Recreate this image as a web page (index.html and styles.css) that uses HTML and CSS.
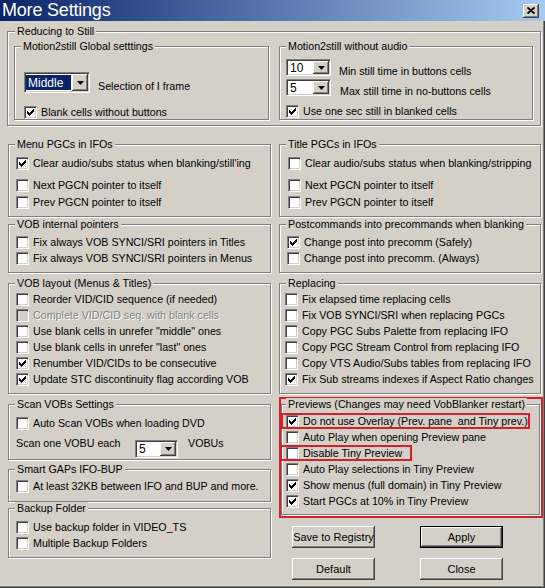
FILE: index.html
```html
<!DOCTYPE html>
<html lang="en">
<head>
    <meta charset="UTF-8">
    <title>More Settings</title>
    <link rel="stylesheet" href="styles.css">
</head>
<body>
<div class="window">
    <div class="titlebar">
        <span class="title">More Settings</span>
        <span class="close"><svg width="8" height="7" viewBox="0 0 8 7"><path d="M0.5 0.5L7.5 6.5M7.5 0.5L0.5 6.5" stroke="#000" stroke-width="1.8"/></svg></span>
    </div>

    <div class="main">
        <div class="group reducing">
            <span class="caption">Reducing to Still</span>
            <div class="pair">
                <div class="group global">
                    <span class="caption">Motion2still Global setttings</span>
                    <div class="combo-row">
                        <span class="combo middle">
                            <span class="field"><span class="sel">Middle</span></span>
                            <span class="drop"><svg width="7" height="4" viewBox="0 0 7 4"><polygon points="0,0 7,0 3.5,4" fill="#000"/></svg></span>
                        </span>
                        <span class="combo-label">Selection of I frame</span>
                    </div>
                    <div class="check gap-global"><span class="box"><svg width="7" height="7" viewBox="0 0 7 7" shape-rendering="crispEdges"><polygon points="0,2 1,2 1,3 2,3 2,4 3,4 3,3 4,3 4,2 5,2 5,1 6,1 6,0 7,0 7,3 6,3 6,4 5,4 5,5 4,5 4,6 3,6 3,7 2,7 2,6 1,6 1,5 0,5"/></svg></span>Blank cells without buttons</div>
                </div>
                <div class="group noaudio">
                    <span class="caption">Motion2still without audio</span>
                    <div class="combo-row">
                        <span class="combo small">
                            <span class="field">10</span>
                            <span class="drop"><svg width="7" height="4" viewBox="0 0 7 4"><polygon points="0,0 7,0 3.5,4" fill="#000"/></svg></span>
                        </span>
                        <span class="combo-label low">Min still time in buttons cells</span>
                    </div>
                    <div class="combo-row second">
                        <span class="combo small">
                            <span class="field">5</span>
                            <span class="drop"><svg width="7" height="4" viewBox="0 0 7 4"><polygon points="0,0 7,0 3.5,4" fill="#000"/></svg></span>
                        </span>
                        <span class="combo-label low wide">Max still time in no-buttons cells</span>
                    </div>
                    <div class="check gap-noaudio"><span class="box"><svg width="7" height="7" viewBox="0 0 7 7" shape-rendering="crispEdges"><polygon points="0,2 1,2 1,3 2,3 2,4 3,4 3,3 4,3 4,2 5,2 5,1 6,1 6,0 7,0 7,3 6,3 6,4 5,4 5,5 4,5 4,6 3,6 3,7 2,7 2,6 1,6 1,5 0,5"/></svg></span>Use one sec still in blanked cells</div>
                </div>
            </div>
        </div>

        <div class="columns">
            <div class="col">
                <div class="group menu">
                    <span class="caption">Menu PGCs in IFOs</span>
                    <div class="check"><span class="box"><svg width="7" height="7" viewBox="0 0 7 7" shape-rendering="crispEdges"><polygon points="0,2 1,2 1,3 2,3 2,4 3,4 3,3 4,3 4,2 5,2 5,1 6,1 6,0 7,0 7,3 6,3 6,4 5,4 5,5 4,5 4,6 3,6 3,7 2,7 2,6 1,6 1,5 0,5"/></svg></span>Clear audio/subs status when blanking/still'ing</div>
                    <div class="check gap6"><span class="box"></span>Next PGCN pointer to itself</div>
                    <div class="check gap1"><span class="box"></span>Prev PGCN pointer to itself</div>
                </div>

                <div class="group pointers">
                    <span class="caption">VOB internal pointers</span>
                    <div class="check"><span class="box"></span>Fix always VOB SYNCI/SRI pointers in Titles</div>
                    <div class="check"><span class="box"></span>Fix always VOB SYNCI/SRI pointers in Menus</div>
                </div>

                <div class="group layout">
                    <span class="caption">VOB layout (Menus &amp; Titles)</span>
                    <div class="check"><span class="box"></span>Reorder VID/CID sequence (if needed)</div>
                    <div class="check disabled"><span class="box dim"></span>Complete VID/CID seq. with blank cells</div>
                    <div class="check"><span class="box"></span>Use blank cells in unrefer "middle" ones</div>
                    <div class="check"><span class="box"></span>Use blank cells in unrefer "last" ones</div>
                    <div class="check"><span class="box"><svg width="7" height="7" viewBox="0 0 7 7" shape-rendering="crispEdges"><polygon points="0,2 1,2 1,3 2,3 2,4 3,4 3,3 4,3 4,2 5,2 5,1 6,1 6,0 7,0 7,3 6,3 6,4 5,4 5,5 4,5 4,6 3,6 3,7 2,7 2,6 1,6 1,5 0,5"/></svg></span>Renumber VID/CIDs to be consecutive</div>
                    <div class="check"><span class="box"><svg width="7" height="7" viewBox="0 0 7 7" shape-rendering="crispEdges"><polygon points="0,2 1,2 1,3 2,3 2,4 3,4 3,3 4,3 4,2 5,2 5,1 6,1 6,0 7,0 7,3 6,3 6,4 5,4 5,5 4,5 4,6 3,6 3,7 2,7 2,6 1,6 1,5 0,5"/></svg></span>Update STC discontinuity flag according VOB</div>
                </div>

                <div class="group scan">
                    <span class="caption">Scan VOBs Settings</span>
                    <div class="check"><span class="box"></span>Auto Scan VOBs when loading DVD</div>
                    <div class="scan-row">
                        <span class="scan-text">Scan one VOBU each</span>
                        <span class="combo scanbox">
                            <span class="field">5</span>
                            <span class="drop"><svg width="7" height="4" viewBox="0 0 7 4"><polygon points="0,0 7,0 3.5,4" fill="#000"/></svg></span>
                        </span>
                        <span class="scan-unit">VOBUs</span>
                    </div>
                </div>

                <div class="group gaps">
                    <span class="caption">Smart GAPs IFO-BUP</span>
                    <div class="check"><span class="box"></span>At least 32KB between IFO and BUP and more.</div>
                </div>

                <div class="group backup">
                    <span class="caption">Backup Folder</span>
                    <div class="check"><span class="box"></span>Use backup folder in VIDEO_TS</div>
                    <div class="check"><span class="box"></span>Multiple Backup Folders</div>
                </div>
            </div>

            <div class="col">
                <div class="group menu titles">
                    <span class="caption">Title PGCs in IFOs</span>
                    <div class="check"><span class="box"></span>Clear audio/subs status when blanking/stripping</div>
                    <div class="check gap6"><span class="box"></span>Next PGCN pointer to itself</div>
                    <div class="check gap1"><span class="box"></span>Prev PGCN pointer to itself</div>
                </div>

                <div class="group pointers">
                    <span class="caption">Postcommands into precommands when blanking</span>
                    <div class="check"><span class="box"><svg width="7" height="7" viewBox="0 0 7 7" shape-rendering="crispEdges"><polygon points="0,2 1,2 1,3 2,3 2,4 3,4 3,3 4,3 4,2 5,2 5,1 6,1 6,0 7,0 7,3 6,3 6,4 5,4 5,5 4,5 4,6 3,6 3,7 2,7 2,6 1,6 1,5 0,5"/></svg></span>Change post into precomm (Safely)</div>
                    <div class="check"><span class="box"></span>Change post into precomm. (Always)</div>
                </div>

                <div class="group layout replacing">
                    <span class="caption">Replacing</span>
                    <div class="check"><span class="box"></span>Fix elapsed time replacing cells</div>
                    <div class="check"><span class="box"></span>Fix VOB SYNCI/SRI when replacing PGCs</div>
                    <div class="check"><span class="box"></span>Copy PGC Subs Palette from replacing IFO</div>
                    <div class="check"><span class="box"></span>Copy PGC Stream Control from replacing IFO</div>
                    <div class="check"><span class="box"></span>Copy VTS Audio/Subs tables from replacing IFO</div>
                    <div class="check"><span class="box"><svg width="7" height="7" viewBox="0 0 7 7" shape-rendering="crispEdges"><polygon points="0,2 1,2 1,3 2,3 2,4 3,4 3,3 4,3 4,2 5,2 5,1 6,1 6,0 7,0 7,3 6,3 6,4 5,4 5,5 4,5 4,6 3,6 3,7 2,7 2,6 1,6 1,5 0,5"/></svg></span>Fix Sub streams indexes if Aspect Ratio changes</div>
                </div>

                <div class="annot">
                    <div class="group previews">
                        <span class="caption">Previews (Changes may need VobBlanker restart)</span>
                        <div class="check mark"><span class="box"><svg width="7" height="7" viewBox="0 0 7 7" shape-rendering="crispEdges"><polygon points="0,2 1,2 1,3 2,3 2,4 3,4 3,3 4,3 4,2 5,2 5,1 6,1 6,0 7,0 7,3 6,3 6,4 5,4 5,5 4,5 4,6 3,6 3,7 2,7 2,6 1,6 1,5 0,5"/></svg></span>Do not use Overlay (Prev. pane&nbsp; and Tiny prev.)</div>
                        <div class="check"><span class="box"></span>Auto Play when opening Preview pane</div>
                        <div class="check mark wide-mark"><span class="box"></span>Disable Tiny Preview</div>
                        <div class="check"><span class="box"></span>Auto Play selections in Tiny Preview</div>
                        <div class="check"><span class="box"><svg width="7" height="7" viewBox="0 0 7 7" shape-rendering="crispEdges"><polygon points="0,2 1,2 1,3 2,3 2,4 3,4 3,3 4,3 4,2 5,2 5,1 6,1 6,0 7,0 7,3 6,3 6,4 5,4 5,5 4,5 4,6 3,6 3,7 2,7 2,6 1,6 1,5 0,5"/></svg></span>Show menus (full domain) in Tiny Preview</div>
                        <div class="check"><span class="box"><svg width="7" height="7" viewBox="0 0 7 7" shape-rendering="crispEdges"><polygon points="0,2 1,2 1,3 2,3 2,4 3,4 3,3 4,3 4,2 5,2 5,1 6,1 6,0 7,0 7,3 6,3 6,4 5,4 5,5 4,5 4,6 3,6 3,7 2,7 2,6 1,6 1,5 0,5"/></svg></span>Start PGCs at 10% in Tiny Preview</div>
                    </div>
                </div>

                <div class="buttons">
                    <span class="btn">Save to Registry</span>
                    <span class="btn default">Apply</span>
                    <span class="btn">Default</span>
                    <span class="btn">Close</span>
                </div>
            </div>
        </div>
    </div>
</div>
</body>
</html>
```

FILE: styles.css
```css
body {
    margin: 0;
    font-family: "Liberation Sans", Arial, sans-serif;
    font-size: 10.7px;
    color: #000;
}

.window {
    width: 545px;
    height: 588px;
    box-sizing: border-box;
    background: #d4d0c8;
    box-shadow: inset -1px -1px 0 #404040, inset -2px -2px 0 #808080;
    overflow: hidden;
}

/* title bar */
.titlebar {
    height: 21px;
    display: flex;
    align-items: center;
    background: linear-gradient(to right, #0a246a, #a6caf0);
}

.title {
    color: #fff;
    font-size: 18px;
    line-height: 21px;
    padding-left: 2px;
    letter-spacing: -0.2px;
}

.close {
    margin-left: auto;
    margin-right: 6px;
    width: 16px;
    height: 14px;
    background: #d4d0c8;
    box-shadow: inset -1px -1px 0 #404040, inset 1px 1px 0 #fff, inset -2px -2px 0 #808080;
    display: flex;
    align-items: center;
    justify-content: center;
}

.main {
    padding: 10px 0 0 7px;
}

/* etched group boxes */
.group {
    position: relative;
    box-sizing: border-box;
    border: 1px solid #808080;
    box-shadow: inset 1px 1px 0 #fff, 1px 1px 0 #fff;
}

.caption {
    position: absolute;
    top: -7px;
    left: 6px;
    padding: 0 2px;
    background: #d4d0c8;
    line-height: 13px;
    white-space: nowrap;
}

.reducing {
    width: 534px;
    height: 95px;
    padding: 14px 7px 0 6px;
}

.reducing > .caption {
    left: 7px;
}

.pair {
    display: grid;
    grid-template-columns: 255px 254px;
    column-gap: 10px;
}

.global,
.noaudio {
    height: 74px;
}

.global {
    padding: 25px 0 0 9px;
}

.noaudio {
    padding: 12px 0 0 6px;
}

/* combo boxes */
.combo-row {
    display: flex;
    align-items: flex-end;
}

.combo-row.second {
    margin-top: 3px;
}

.combo-label {
    line-height: 13px;
    margin-left: 8px;
    white-space: nowrap;
}

.combo-label.low {
    margin-bottom: -2px;
}

.combo-label.wide {
    margin-left: 9px;
}

.combo {
    display: inline-flex;
    box-sizing: border-box;
    background: #fff;
    border: 1px solid;
    border-color: #808080 #fff #fff #808080;
    box-shadow: inset 1px 1px 0 #404040, inset -1px -1px 0 #d4d0c8;
    padding: 1px;
    flex: none;
}

.combo .field {
    flex: 1;
    display: flex;
    align-items: center;
    padding-left: 2px;
    font-size: 12px;
}

.combo .drop {
    width: 16px;
    background: #d4d0c8;
    box-shadow: inset -1px -1px 0 #404040, inset 1px 1px 0 #fff, inset -2px -2px 0 #808080;
    display: flex;
    align-items: center;
    justify-content: center;
}

.combo .drop svg {
    display: block;
}

.middle {
    width: 66px;
    height: 21px;
}

.middle .field {
    padding: 1px 1px 1px 0;
    align-items: stretch;
}

.sel {
    flex: 1;
    background: #0a246a;
    color: #fff;
    padding-left: 2px;
    display: flex;
    align-items: center;
}

.small {
    width: 45px;
    height: 17px;
}

.scanbox {
    width: 43px;
    height: 18px;
}

/* check boxes */
.check {
    display: flex;
    align-items: center;
    height: 16px;
    white-space: nowrap;
}

.box {
    width: 13px;
    height: 13px;
    box-sizing: border-box;
    flex: none;
    margin-right: 4px;
    background: #fff;
    border: 1px solid;
    border-color: #808080 #fff #fff #808080;
    box-shadow: inset 1px 1px 0 #404040, inset -1px -1px 0 #d4d0c8;
    display: flex;
    align-items: center;
    justify-content: center;
}

.box svg {
    display: block;
}

.box.dim {
    background: #d4d0c8;
}

.check.disabled {
    color: #808080;
    text-shadow: 1px 1px 0 #fff;
}

.gap-global {
    margin-top: 11px;
}

.gap-noaudio {
    margin-top: 7px;
}

.gap6 {
    margin-top: 6px;
}

.gap1 {
    margin-top: 1px;
}

/* two columns of groups */
.columns {
    display: grid;
    grid-template-columns: 263px 262px;
    column-gap: 8px;
    margin: 18px 0 0 1px;
}

.col {
    display: flex;
    flex-direction: column;
}

.col .group {
    padding-left: 7px;
}

.menu {
    height: 73px;
    padding-top: 10px;
}

.col .titles {
    padding-left: 8px;
}

.pointers {
    height: 49px;
    margin-top: 7px;
    padding-top: 9px;
}

.layout {
    height: 111px;
    margin-top: 10px;
    padding-top: 7px;
}

.col .replacing {
    padding-left: 5px;
}

.scan {
    height: 56px;
    margin-top: 10px;
    padding-top: 10px;
}

.scan-row {
    display: flex;
    align-items: flex-start;
    margin-top: 9px;
}

.scan-text {
    width: 119px;
    margin-top: -3px;
    line-height: 13px;
}

.scan-unit {
    margin-left: 10px;
    margin-top: -3px;
    line-height: 13px;
}

.gaps {
    height: 33px;
    margin-top: 9px;
    padding-top: 8px;
}

.backup {
    height: 50px;
    margin-top: 6px;
    padding-top: 10px;
}

/* red annotation boxes */
.annot {
    width: 264px;
    height: 121px;
    box-sizing: border-box;
    margin-top: 3px;
    padding-top: 5px;
    border: 2px solid #d3202c;
}

.col .previews {
    width: 259px;
    height: 111px;
    padding-top: 8px;
    padding-left: 4px;
}

.previews .caption {
    left: 4px;
}

.mark {
    width: fit-content;
    outline: 2px solid #d3202c;
    outline-offset: -2px;
    margin-left: -5px;
    padding-left: 5px;
    padding-right: 2px;
}

.wide-mark {
    margin-left: -6px;
    padding-left: 6px;
    padding-right: 10px;
}

/* buttons */
.buttons {
    display: grid;
    grid-template-columns: 83px 83px;
    column-gap: 45px;
    row-gap: 10px;
    margin: 8px 0 0 13px;
}

.btn {
    height: 22px;
    box-sizing: border-box;
    display: flex;
    align-items: center;
    justify-content: center;
    background: #d4d0c8;
    box-shadow: inset -1px -1px 0 #404040, inset 1px 1px 0 #fff, inset -2px -2px 0 #808080;
    white-space: nowrap;
    font-size: 11px;
}

.btn.default {
    border: 1px solid #000;
}
```
